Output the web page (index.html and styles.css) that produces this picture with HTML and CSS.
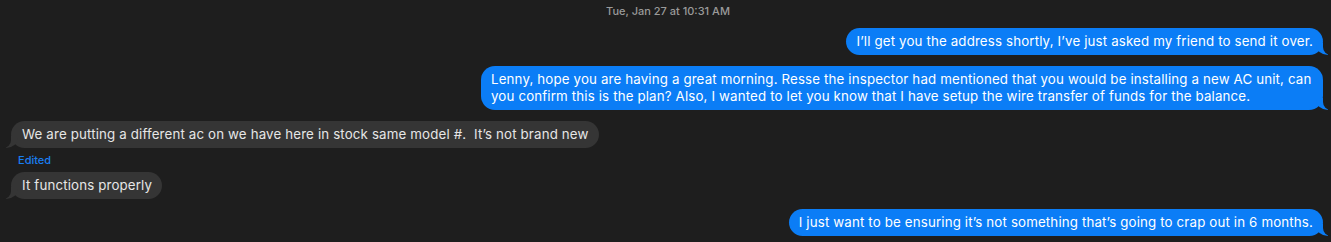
FILE: index.html
```html
<!DOCTYPE html>
<html lang="en">
<head>
<meta charset="utf-8">
<title>Messages</title>
<link rel="stylesheet" href="styles.css">
</head>
<body>
<main class="thread">
  <div class="stamp">Tue, Jan 27 at 10:31 AM</div>
  <div class="msg sent gap-sm">I’ll get you the address shortly, I’ve just asked my friend to send it over.</div>
  <div class="msg sent gap-md">Lenny, hope you are having a great morning. Resse the inspector had mentioned that you would be installing a new AC unit, can you confirm this is the plan? Also, I wanted to let you know that I have setup the wire transfer of funds for the balance.</div>
  <div class="msg recv">We are putting a different ac on we have here in stock same model #.&nbsp; It’s not brand new</div>
  <div class="edited">Edited</div>
  <div class="msg recv">It functions properly</div>
  <div class="msg sent gap-lg">I just want to be ensuring it’s not something that’s going to crap out in 6 months.</div>
</main>
</body>
</html>
```
FILE: styles.css
```css
html, body {
  margin: 0;
  padding: 0;
  background: #1e1e1e;
  height: 100%;
}
body {
  font-family: "Inter", "Liberation Sans", sans-serif;
  -webkit-font-smoothing: antialiased;
}
.thread {
  display: flex;
  flex-direction: column;
  align-items: flex-start;
  padding: 5px 8px 0 11px;
}
.stamp {
  align-self: stretch;
  text-align: center;
  font-size: 11px;
  line-height: 13px;
  font-weight: 500;
  color: #9a9a9a;
  margin-bottom: 10px;
  padding-left: 2px;
}
.msg {
  position: relative;
  max-width: 842px;
  box-sizing: border-box;
  padding: 5px 10px;
  font-size: 13.3px;
  letter-spacing: 0.15px;
  line-height: 17px;
  border-radius: 14px;
}
.sent {
  align-self: flex-end;
  background: #0b7df6;
  color: #ffffff;
}
.recv {
  background: #353535;
  color: #e6e6e6;
  padding-left: 11px;
}
.gap-sm { margin-bottom: 11px; }
.gap-md { margin-bottom: 11px; }
.gap-lg { margin-top: 10px; }
.sent::before,
.sent::after,
.recv::before,
.recv::after {
  content: "";
  position: absolute;
  bottom: 0;
  height: 12px;
}
.sent::before {
  right: -5px;
  width: 12px;
  background: #0b7df6;
  border-bottom-left-radius: 12px 10px;
}
.sent::after {
  right: -12px;
  width: 12px;
  background: #1e1e1e;
  border-bottom-left-radius: 8px 8px;
}
.recv::before {
  left: -5px;
  width: 12px;
  background: #353535;
  border-bottom-right-radius: 12px 10px;
}
.recv::after {
  left: -12px;
  width: 12px;
  background: #1e1e1e;
  border-bottom-right-radius: 8px 8px;
}
.edited {
  font-size: 11px;
  line-height: 13px;
  font-weight: 500;
  color: #1a7ff2;
  padding-left: 7px;
  margin-top: 6px;
  margin-bottom: 5px;
}
```
